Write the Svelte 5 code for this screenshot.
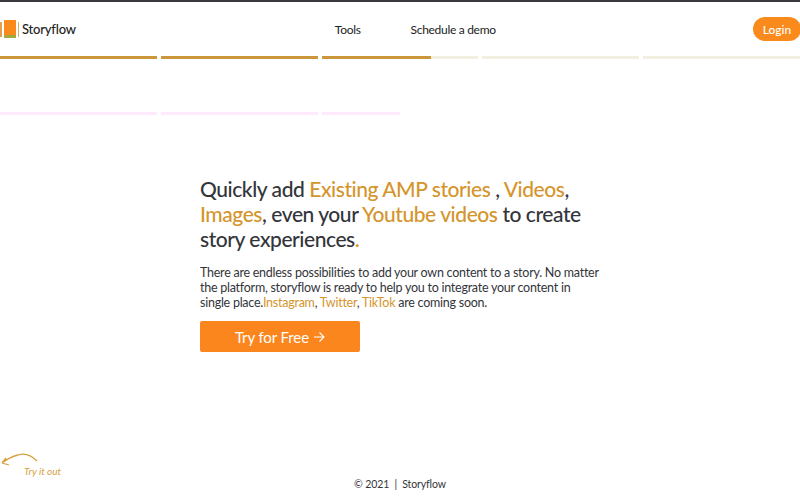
<script>
  const segments = [100, 100, 70, 0, 0];
  const ghosts = [157, 157, 78];
</script>

<div class="page">
  <div class="topline"></div>
  <header>
    <div class="brand">
      <svg class="logo" width="19" height="20" viewBox="0 0 19 20" aria-hidden="true">
        <rect x="0" y="3" width="2" height="15" fill="#e0a050" />
        <rect x="4" y="1" width="12" height="15" fill="#fb8a1c" />
        <rect x="4" y="16" width="12" height="3" fill="#a5a83c" />
        <rect x="18" y="3" width="1" height="15" fill="#d2b26a" />
      </svg>
      <span>Storyflow</span>
    </div>
    <nav>
      <span>Tools</span>
      <span>Schedule a demo</span>
    </nav>
    <button class="login">Login</button>
  </header>

  <div class="progress">
    {#each segments as s}
      <div class="seg"><div class="fill" style="width:{s}%"></div></div>
    {/each}
  </div>

  <div class="ghost" aria-hidden="true">
    {#each ghosts as g}
      <div class="ghost-bar" style="width:{g}px"></div>
    {/each}
  </div>

  <main>
    <h1>Quickly add <em>Existing AMP stories</em> , <em>Videos</em>, <em>Images</em>, even your <em>Youtube videos</em> to create story experiences<em>.</em></h1>
    <p>There are endless possibilities to add your own content to a story. No matter the platform, storyflow is ready to help you to integrate your content in single place.<em>Instagram</em>, <em>Twitter</em>, <em>TikTok</em> are coming soon.</p>
    <button class="cta">Try for Free
      <svg width="12" height="12" viewBox="0 0 12 12" fill="none" stroke="#fff" stroke-width="1.1" aria-hidden="true"><path d="M1 6h10M6.500 1.500 11 6l-4.500 4.500" /></svg>
    </button>
  </main>

  <div class="hint">
    <svg width="40" height="18" viewBox="0 0 40 18" fill="none" stroke="#d6a03e" stroke-width="1.300" aria-hidden="true"><path d="M37 9C31 3 24 1 18 3 12 4.500 7 7 2 11M2 11l4-5M2 11l7 2" /></svg>
    <span>Try it out</span>
  </div>

  <footer>© 2021 &nbsp;|&nbsp; Storyflow</footer>
</div>

<style>
  :global(body) { margin: 0; background: #fff; }
  .page {
    height: 500px;
    width: 800px;
    overflow: hidden;
    position: relative;
    font-family: Lato, "Noto Sans", sans-serif;
    color: #33353a;
    display: flex;
    flex-direction: column;
  }
  .topline { height: 2px; background: #3a3a3e; flex: none; }
  header {
    height: 54px;
    flex: none;
    display: flex;
    align-items: center;
    font-size: 12px;
  }
  .brand { display: flex; align-items: center; gap: 3px; font-size: 13px; letter-spacing: -0.2px; font-weight: 500; color: #222; }
  .logo { display: block; }
  nav { margin-left: 259px; display: flex; gap: 50px; color: #222; letter-spacing: -0.3px; }
  .login {
    margin-left: auto;
    margin-right: -1px;
    width: 48px;
    height: 24px;
    border: 0;
    border-radius: 12px;
    background: #fb8a1c;
    color: #fff;
    font: 500 12px Lato, sans-serif;
    padding: 0;
  }
  .progress { display: flex; gap: 4px; flex: none; }
  .seg { flex: 1; height: 3px; background: #f3efe0; }
  .fill { height: 100%; background: #cc963a; }
  .ghost { position: absolute; left: 0; top: 112px; display: flex; gap: 4px; }
  .ghost-bar { height: 3px; background: #ffe9fb; }
  main { margin-left: 200px; width: 410px; padding-top: 117px; }
  h1 {
    margin: 0;
    font-size: 21px;
    line-height: 25px;
    font-weight: 500;
    letter-spacing: -0.44px;
    color: #33353a;
  }
  em { font-style: normal; color: #d4952c; }
  p {
    margin: 14px 0 0;
    width: 401px;
    font-size: 12.500px;
    line-height: 15px;
    letter-spacing: -0.25px;
    color: #33353a;
  }
  .cta {
    margin-top: 11px;
    width: 160px;
    height: 31px;
    border: 0;
    border-radius: 2px;
    background: #fc861e;
    color: #fff;
    font: 400 15px Lato, sans-serif;
    letter-spacing: -0.1px;
    display: flex;
    align-items: center;
    justify-content: center;
    gap: 4px;
    padding: 0;
  }
  .hint { position: absolute; left: 0; top: 452px; width: 70px; height: 30px; }
  .hint svg { position: absolute; left: 0; top: 0; }
  .hint span { position: absolute; left: 24px; top: 13px; font-size: 10px; color: #d6a03e; font-style: italic; white-space: nowrap; }
  footer {
    position: absolute;
    left: 0; right: 0; top: 478px;
    text-align: center;
    font-size: 10.500px;
    letter-spacing: -0.1px;
    color: #33353a;
  }
</style>
